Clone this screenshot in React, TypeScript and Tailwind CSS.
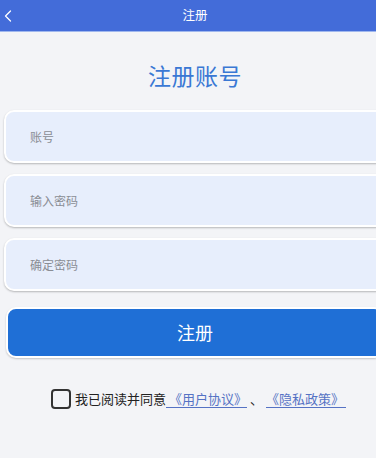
import { ChevronLeft } from "lucide-react";

export default function App() {
  return (
    <div className="w-[376px] h-[458px] overflow-hidden bg-[#f3f4f7]">
      <div
        className="w-[390px] h-full flex flex-col"
        style={{ fontFamily: '"Noto Sans CJK SC", "Noto Sans", sans-serif' }}
      >
        <div className="h-[32px] bg-[#436cd9] border-b border-[#9fb7ee] flex items-center relative shrink-0">
          <ChevronLeft className="absolute -left-[2px] w-[20px] h-[20px] text-white" strokeWidth={1.5} />
          <div className="flex-1 text-center text-white text-[12.5px]">注册</div>
        </div>

        <div className="pt-[24px] text-center text-[#3a78d4] text-[23px] leading-[38px] tracking-[0.5px]">注册账号</div>

        <div className="px-[4px] mt-[16px] flex flex-col gap-[11px]">
          {["账号", "输入密码", "确定密码"].map((p) => (
            <div
              key={p}
              className="h-[53px] rounded-[10px] border-[2px] border-white bg-[#e7eefc] shadow-[0_1px_2px_rgba(0,0,0,0.25)] flex items-center pl-[24px] text-[12px] text-[#8a8d94]"
            >
              {p}
            </div>
          ))}
        </div>

        <div className="px-[6px] mt-[16px]">
          <button className="w-full h-[51px] rounded-[10px] border-[2px] border-white bg-[#1f6fd6] shadow-[0_1px_2px_rgba(0,0,0,0.2)] text-white text-[18px] flex items-center justify-center">
            注册
          </button>
        </div>

        <div className="mt-[31px] pl-[51px] flex items-center">
          <span className="w-[20px] h-[20px] border-[2px] border-[#333] rounded-[4px] shrink-0" />
          <span className="ml-[4px] text-[13px] text-[#222]">我已阅读并同意</span>
          <span className="text-[13px] text-[#5572c4] border-b border-[#5572c4] leading-[16px] pl-[3px]">《用户协议》</span>
          <span className="text-[13px] text-[#222] px-[3px]">、</span>
          <span className="text-[13px] text-[#5572c4] border-b border-[#5572c4] leading-[16px] pr-[2px]">《隐私政策》</span>
        </div>
      </div>
    </div>
  );
}
